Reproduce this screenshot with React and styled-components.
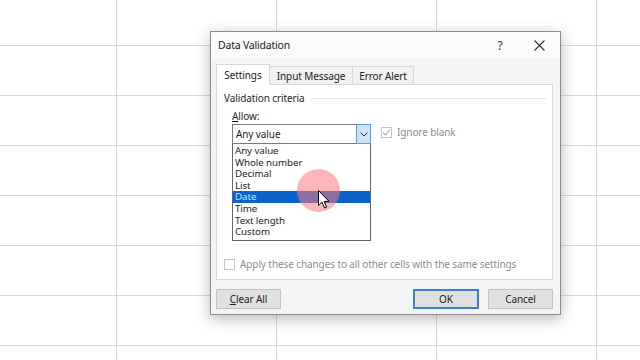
import React from "react";
import styled, { createGlobalStyle } from "styled-components";

const GlobalStyle = createGlobalStyle`
  html, body {
    margin: 0;
    padding: 0;
    background: #ffffff;
  }
  body {
    font-family: "Noto Sans", "Open Sans", Arial, sans-serif;
  }
`;

const Sheet = styled.div`
  position: relative;
  width: 640px;
  height: 360px;
  overflow: hidden;
  background-color: #ffffff;
  background-image: linear-gradient(to right, #d9d9d9 1px, transparent 1px),
    linear-gradient(to bottom, #d9d9d9 1px, transparent 1px);
  background-size: 160px 50px;
  background-position: 116px 45px;
`;

const Dialog = styled.div`
  position: absolute;
  left: 210px;
  top: 31px;
  width: 351px;
  height: 284px;
  box-sizing: border-box;
  border: 1px solid #8c8c8c;
  background: #f4f4f4;
  box-shadow: 0 4px 14px rgba(0, 0, 0, 0.28);
  display: flex;
  flex-direction: column;
  color: #1e1e1e;
  font-size: 10px;
  letter-spacing: -0.1px;
`;

const TitleBar = styled.div`
  height: 26px;
  display: flex;
  align-items: center;
  padding: 0 6px 0 7px;
  background: #fbfbfb;
`;

const Title = styled.div`
  flex: 1;
  font-size: 10.5px;
  letter-spacing: -0.2px;
  color: #222;
`;

const TitleButton = styled.div`
  width: ${(p) => p.w}px;
  margin-right: ${(p) => p.gap || 0}px;
  display: flex;
  justify-content: center;
  align-items: center;
  color: #333;
  font-size: 12px;
`;

const Body = styled.div`
  flex: 1;
  display: flex;
  flex-direction: column;
  padding: 6px 7px 0 5px;
`;

const Tabs = styled.div`
  display: flex;
  align-items: flex-end;
  height: 21px;
  position: relative;
  z-index: 1;
  margin-bottom: -1px;
`;

const Tab = styled.div`
  box-sizing: border-box;
  width: ${(p) => p.w}px;
  height: ${(p) => (p.active ? 21 : 19)}px;
  display: flex;
  align-items: center;
  justify-content: center;
  border: 1px solid #d9d9d9;
  border-bottom: ${(p) => (p.active ? "1px solid #ffffff" : "1px solid #d9d9d9")};
  border-left: ${(p) => (p.first || p.active ? "1px solid #d9d9d9" : "none")};
  background: ${(p) => (p.active ? "#ffffff" : "#f0f0f0")};
  color: #222;
`;

const Panel = styled.div`
  box-sizing: border-box;
  height: 196px;
  border: 1px solid #d9d9d9;
  background: #ffffff;
  padding: 5px 6px 0 7px;
  display: flex;
  flex-direction: column;
`;

const GroupHead = styled.div`
  display: flex;
  align-items: center;
  gap: 6px;
  height: 16px;
`;

const GroupRule = styled.div`
  flex: 1;
  height: 1px;
  background: #e3e3e3;
`;

const Indent = styled.div`
  padding-left: 8px;
  display: flex;
  flex-direction: column;
`;

const Label = styled.div`
  margin-top: 2px;
  height: 16px;
  display: flex;
  align-items: center;
`;

const Row = styled.div`
  display: flex;
  align-items: flex-start;
  gap: 10px;
`;

const ComboColumn = styled.div`
  width: 139px;
  display: flex;
  flex-direction: column;
`;

const Combo = styled.div`
  box-sizing: border-box;
  height: 20px;
  border: 1px solid #7a7a7a;
  display: flex;
  align-items: stretch;
  background: #fff;
`;

const ComboText = styled.div`
  flex: 1;
  display: flex;
  align-items: center;
  padding-left: 3px;
`;

const ComboButton = styled.div`
  width: 13px;
  border: 1px solid #5b9be0;
  margin: -1px -1px -1px 0;
  background: #cde4f7;
  display: flex;
  align-items: center;
  justify-content: center;
`;

const List = styled.div`
  box-sizing: border-box;
  border: 1px solid #646464;
  border-top: none;
  padding: 1px 0 2px;
  background: #fff;
`;

const Item = styled.div`
  height: 11.6px;
  line-height: 11.6px;
  font-size: 9.8px;
  padding-left: 2px;
  background: ${(p) => (p.selected ? "#0a63c9" : "transparent")};
  color: ${(p) => (p.selected ? "#bfe0ff" : "#1e1e1e")};
`;

const Check = styled.div`
  display: flex;
  align-items: center;
  gap: 5px;
  color: #8d8d8d;
  margin-top: ${(p) => p.top || 0}px;
`;

const Box = styled.div`
  box-sizing: border-box;
  width: 11px;
  height: 11px;
  border: 1px solid #c4c4c4;
  background: #fff;
  display: flex;
  align-items: center;
  justify-content: center;
`;

const Spacer = styled.div`
  flex: 1;
`;

const ApplyRow = styled(Check)`
  height: 14px;
  margin-bottom: 8px;
  gap: 5px;
`;

const Footer = styled.div`
  display: flex;
  align-items: center;
  margin-top: 9px;
  gap: 9px;
`;

const Button = styled.div`
  box-sizing: border-box;
  width: ${(p) => p.w}px;
  height: 20px;
  display: flex;
  align-items: center;
  justify-content: center;
  background: #e1e1e1;
  border: ${(p) => (p.primary ? "2px solid #3a7fd0" : "1px solid #c3c3c3")};
  color: #222;
`;

const Pointer = styled.div`
  position: absolute;
  left: 297px;
  top: 169px;
  width: 43px;
  height: 43px;
  border-radius: 50%;
  background: rgba(250, 120, 130, 0.55);
  pointer-events: none;
`;

const Cursor = styled.svg`
  position: absolute;
  left: 318px;
  top: 190px;
`;

const items = [
  "Any value",
  "Whole number",
  "Decimal",
  "List",
  "Date",
  "Time",
  "Text length",
  "Custom",
];

export default function App() {
  return (
    <>
      <GlobalStyle />
      <Sheet>
        <Dialog>
          <TitleBar>
            <Title>Data Validation</Title>
            <TitleButton w={20} gap={14}>?</TitleButton>
            <TitleButton w={30}>
              <svg width="11" height="11" viewBox="0 0 11 11">
                <path d="M0.5 0.5 L10.5 10.5 M10.5 0.5 L0.5 10.5" stroke="#333" strokeWidth="1.1" />
              </svg>
            </TitleButton>
          </TitleBar>
          <Body>
            <Tabs>
              <Tab w={54} active first>Settings</Tab>
              <Tab w={83}>Input Message</Tab>
              <Tab w={61}>Error Alert</Tab>
            </Tabs>
            <Panel>
              <GroupHead>
                <span>Validation criteria</span>
                <GroupRule />
              </GroupHead>
              <Indent>
                <Label>
                  <span><u>A</u>llow:</span>
                </Label>
                <Row>
                  <ComboColumn>
                    <Combo>
                      <ComboText>Any value</ComboText>
                      <ComboButton>
                        <svg width="8" height="5" viewBox="0 0 8 5">
                          <path d="M0.5 0.5 L4 4 L7.5 0.5" stroke="#333" strokeWidth="1" fill="none" />
                        </svg>
                      </ComboButton>
                    </Combo>
                    <List>
                      {items.map((it) => (
                        <Item key={it} selected={it === "Date"}>
                          {it}
                        </Item>
                      ))}
                    </List>
                  </ComboColumn>
                  <Check top={1}>
                    <Box>
                      <svg width="9" height="9" viewBox="0 0 9 9">
                        <path d="M1 4.5 L3.5 7 L8 1.5" stroke="#a8a8a8" strokeWidth="1.1" fill="none" />
                      </svg>
                    </Box>
                    <span>Ignore blank</span>
                  </Check>
                </Row>
              </Indent>
              <Spacer />
              <ApplyRow>
                <Box />
                <span>Apply these changes to all other cells with the same settings</span>
              </ApplyRow>
            </Panel>
            <Footer>
              <Button w={65}>
                <span><u>C</u>lear All</span>
              </Button>
              <Spacer />
              <Button w={66} primary>OK</Button>
              <Button w={65}>Cancel</Button>
            </Footer>
          </Body>
        </Dialog>
        <Pointer />
        <Cursor width="12" height="19" viewBox="0 0 12 19">
          <path
            d="M0.5 0.5 L0.5 15.5 L4 12.2 L6.5 18 L8.6 17.1 L6.2 11.4 L11 11.4 Z"
            fill="#ffffff"
            stroke="#000000"
            strokeWidth="1"
            strokeLinejoin="round"
          />
        </Cursor>
      </Sheet>
    </>
  );
}
